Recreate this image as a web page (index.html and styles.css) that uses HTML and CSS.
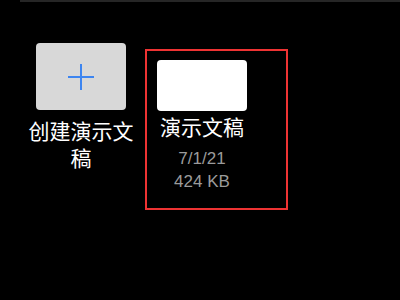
FILE: index.html
```html
<!DOCTYPE html>
<html lang="zh-CN">
<head>
<meta charset="utf-8">
<link rel="stylesheet" href="styles.css">
</head>
<body>
<div class="topline"></div>
<div class="grid">
  <div class="item create">
    <div class="tile gray">
      <svg class="plus" width="28" height="28" viewBox="0 0 28 28"><path d="M14 1V27M1 14H27" stroke="#3d85f0" stroke-width="2" fill="none"/></svg>
    </div>
    <div class="title">创建演示文稿</div>
  </div>
  <div class="doc">
    <div class="item doc-inner">
      <div class="tile white"></div>
      <div class="title">演示文稿</div>
      <div class="meta first">7/1/21</div>
      <div class="meta">424 KB</div>
    </div>
  </div>
</div>
</body>
</html>
```
FILE: styles.css
```css
html, body {
  margin: 0;
  padding: 0;
  background: #000;
  width: 400px;
  height: 300px;
  overflow: hidden;
  font-family: "Liberation Sans", "Noto Sans CJK SC", sans-serif;
}
.topline {
  margin-left: 20px;
  height: 2px;
  background: #262626;
}
.grid {
  display: flex;
  align-items: flex-start;
  padding-left: 26px;
  gap: 9px;
}
.item {
  display: flex;
  flex-direction: column;
  align-items: center;
  text-align: center;
}
.create {
  width: 110px;
  margin-top: 41px;
}
.doc {
  width: 129px;
  margin-top: 47px;
  border: 2px solid #ee3333;
  padding: 9px 0 15px 10px;
}
.doc-inner {
  width: 90px;
}
.tile {
  width: 90px;
  border-radius: 4px;
  display: flex;
  align-items: center;
  justify-content: center;
}
.gray {
  height: 67px;
  background: #d8d8d8;
}
.white {
  height: 51px;
  background: #fff;
}
.title {
  color: #fff;
  font-size: 21px;
  line-height: 27px;
}
.create .title {
  margin-top: 8px;
}
.doc .title {
  margin-top: 3px;
  white-space: nowrap;
}
.meta {
  color: #9b9b9b;
  font-size: 17px;
  line-height: 23px;
}
.meta.first {
  margin-top: 6px;
}
```
